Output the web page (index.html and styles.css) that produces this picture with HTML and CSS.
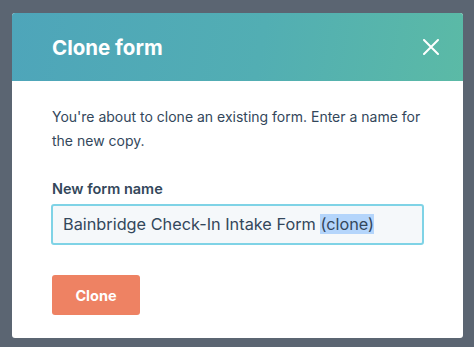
FILE: index.html
```html
<!DOCTYPE html>
<html>
<head>
<meta charset="utf-8">
<link rel="stylesheet" href="styles.css">
</head>
<body>
<div class="modal">
  <div class="modal-header">
    <h1 class="title">Clone form</h1>
    <button class="close" aria-label="Close">
      <svg width="16" height="16" viewBox="0 0 16 16"><path d="M1 1 L15 15 M15 1 L1 15" stroke="#fff" stroke-width="2" stroke-linecap="round"/></svg>
    </button>
  </div>
  <div class="modal-body">
    <p class="intro">You're about to clone an existing form. Enter a name for the new copy.</p>
    <label class="label">New form name</label>
    <div class="input">Bainbridge Check-In Intake Form <span class="sel">(clone)</span></div>
    <button class="btn">Clone</button>
  </div>
</div>
</body>
</html>
```
FILE: styles.css
```css
html, body { margin: 0; padding: 0; }
body {
  background: #5b6572;
  font-family: Inter, Lato, sans-serif;
  color: #33475b;
  padding: 13px 11px 9px 12px;
  height: 347px;
  box-sizing: border-box;
}
.modal {
  width: 451px;
  height: 325px;
  background: #fff;
  border-radius: 3px;
  overflow: hidden;
  display: flex;
  flex-direction: column;
}
.modal-header {
  height: 68px;
  flex: none;
  background: linear-gradient(100deg, #4ea5ba 0%, #52aeb3 55%, #5bbaa6 100%);
  display: flex;
  align-items: center;
  justify-content: space-between;
  padding: 0 24px 0 40px;
}
.title {
  margin: 0;
  color: #fff;
  font-size: 20.5px;
  font-weight: 700;
}
.close {
  background: none;
  border: 0;
  padding: 0;
  width: 16px;
  height: 16px;
  display: flex;
}
.modal-body {
  padding: 24px 40px 0 40px;
  display: flex;
  flex-direction: column;
  align-items: flex-start;
}
.intro {
  margin: 0;
  font-size: 14px;
  line-height: 24px;
}
.label {
  margin-top: 26px;
  font-size: 14.5px;
  font-weight: 600;
  line-height: 20px;
}
.input {
  margin-top: 5px;
  width: 373px;
  height: 41px;
  box-sizing: border-box;
  border: 2px solid #7fd3e6;
  border-radius: 3px;
  background: #f5f8fa;
  padding: 0 0 0 10px;
  font-size: 16.3px;
  line-height: 37px;
  margin-left: -1px;
}
.sel { background: #b4d5fb; }
.btn {
  margin-top: 30px;
  width: 88px;
  height: 40px;
  border: 0;
  border-radius: 3px;
  background: #ee8263;
  color: #fff;
  font-family: Inter, Lato, sans-serif;
  font-size: 14.5px;
  font-weight: 700;
}
```
